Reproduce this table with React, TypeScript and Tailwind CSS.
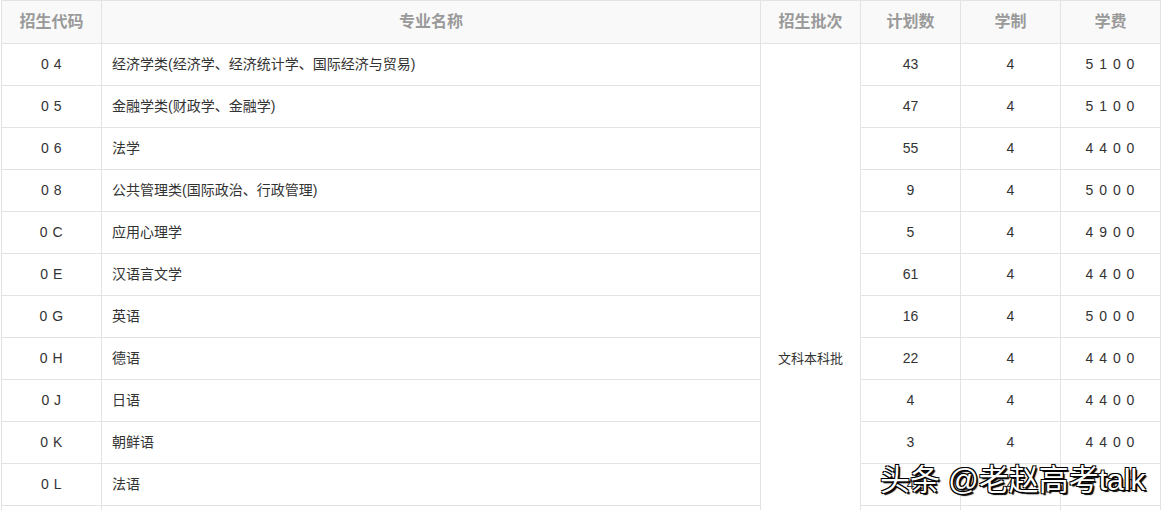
const ROWS = [
  { code: '0 4', name: '经济学类(经济学、经济统计学、国际经济与贸易)', plan: '43', years: '4', fee: '5 1 0 0' },
  { code: '0 5', name: '金融学类(财政学、金融学)', plan: '47', years: '4', fee: '5 1 0 0' },
  { code: '0 6', name: '法学', plan: '55', years: '4', fee: '4 4 0 0' },
  { code: '0 8', name: '公共管理类(国际政治、行政管理)', plan: '9', years: '4', fee: '5 0 0 0' },
  { code: '0 C', name: '应用心理学', plan: '5', years: '4', fee: '4 9 0 0' },
  { code: '0 E', name: '汉语言文学', plan: '61', years: '4', fee: '4 4 0 0' },
  { code: '0 G', name: '英语', plan: '16', years: '4', fee: '5 0 0 0' },
  { code: '0 H', name: '德语', plan: '22', years: '4', fee: '4 4 0 0' },
  { code: '0 J', name: '日语', plan: '4', years: '4', fee: '4 4 0 0' },
  { code: '0 K', name: '朝鲜语', plan: '3', years: '4', fee: '4 4 0 0' },
  { code: '0 L', name: '法语', plan: '4', years: '4', fee: '4 4 0 0' },
  { code: '0 M', name: '西班牙语', plan: '4', years: '4', fee: '4 4 0 0' },
  { code: '0 N', name: '俄语', plan: '4', years: '4', fee: '4 4 0 0' },
  { code: '0 P', name: '新闻学', plan: '10', years: '4', fee: '4 4 0 0' },
  { code: '0 Q', name: '历史学', plan: '8', years: '4', fee: '4 4 0 0' },
];

const HEADERS = ['招生代码', '专业名称', '招生批次', '计划数', '学制', '学费'];
const WIDTHS = ['w-[100px]', 'w-[659px]', 'w-[100px]', 'w-[100px]', 'w-[100px]', 'w-[100px]'];

const cell = 'border border-[#e3e3e3] p-0 align-middle';

export default function App() {
  return (
    <div
      className="relative h-[510px] w-[1161px] overflow-hidden bg-white pl-px text-[14px] text-[#333]"
      style={{ fontFamily: '"Liberation Sans", Arial, "Noto Sans CJK SC", sans-serif' }}
    >
      <table className="w-[1160px] table-fixed border-collapse">
        <colgroup>
          {WIDTHS.map((w, i) => (
            <col key={i} className={w} />
          ))}
        </colgroup>
        <thead>
          <tr className="bg-[#f9f9f9]">
            {HEADERS.map((h) => (
              <th
                key={h}
                className={`${cell} h-[43px] text-center text-[16px] font-bold text-[#9a9a9a]`}
              >
                {h}
              </th>
            ))}
          </tr>
        </thead>
        <tbody>
          {ROWS.map((r, i) => (
            <tr key={r.code}>
              <td className={`${cell} h-[42px] text-center tracking-[0.5px]`}>{r.code}</td>
              <td className={`${cell} h-[42px] px-[10px] text-left`}>{r.name}</td>
              {i === 0 && (
                <td rowSpan={ROWS.length} className={`${cell} text-center text-[13px]`}>
                  文科本科批
                </td>
              )}
              <td className={`${cell} h-[42px] text-center`}>{r.plan}</td>
              <td className={`${cell} h-[42px] text-center`}>{r.years}</td>
              <td className={`${cell} h-[42px] text-center tracking-[1px]`}>{r.fee}</td>
            </tr>
          ))}
        </tbody>
      </table>

      {/* watermark */}
      <div className="absolute left-[880px] top-[465px] whitespace-nowrap text-[30px] leading-none text-white [text-shadow:1px_1px_0_#000,-1px_-1px_0_#000,1px_-1px_0_#000,-1px_1px_0_#000,2px_2px_1px_#000]">
        头条 @老赵高考talk
      </div>
    </div>
  );
}
